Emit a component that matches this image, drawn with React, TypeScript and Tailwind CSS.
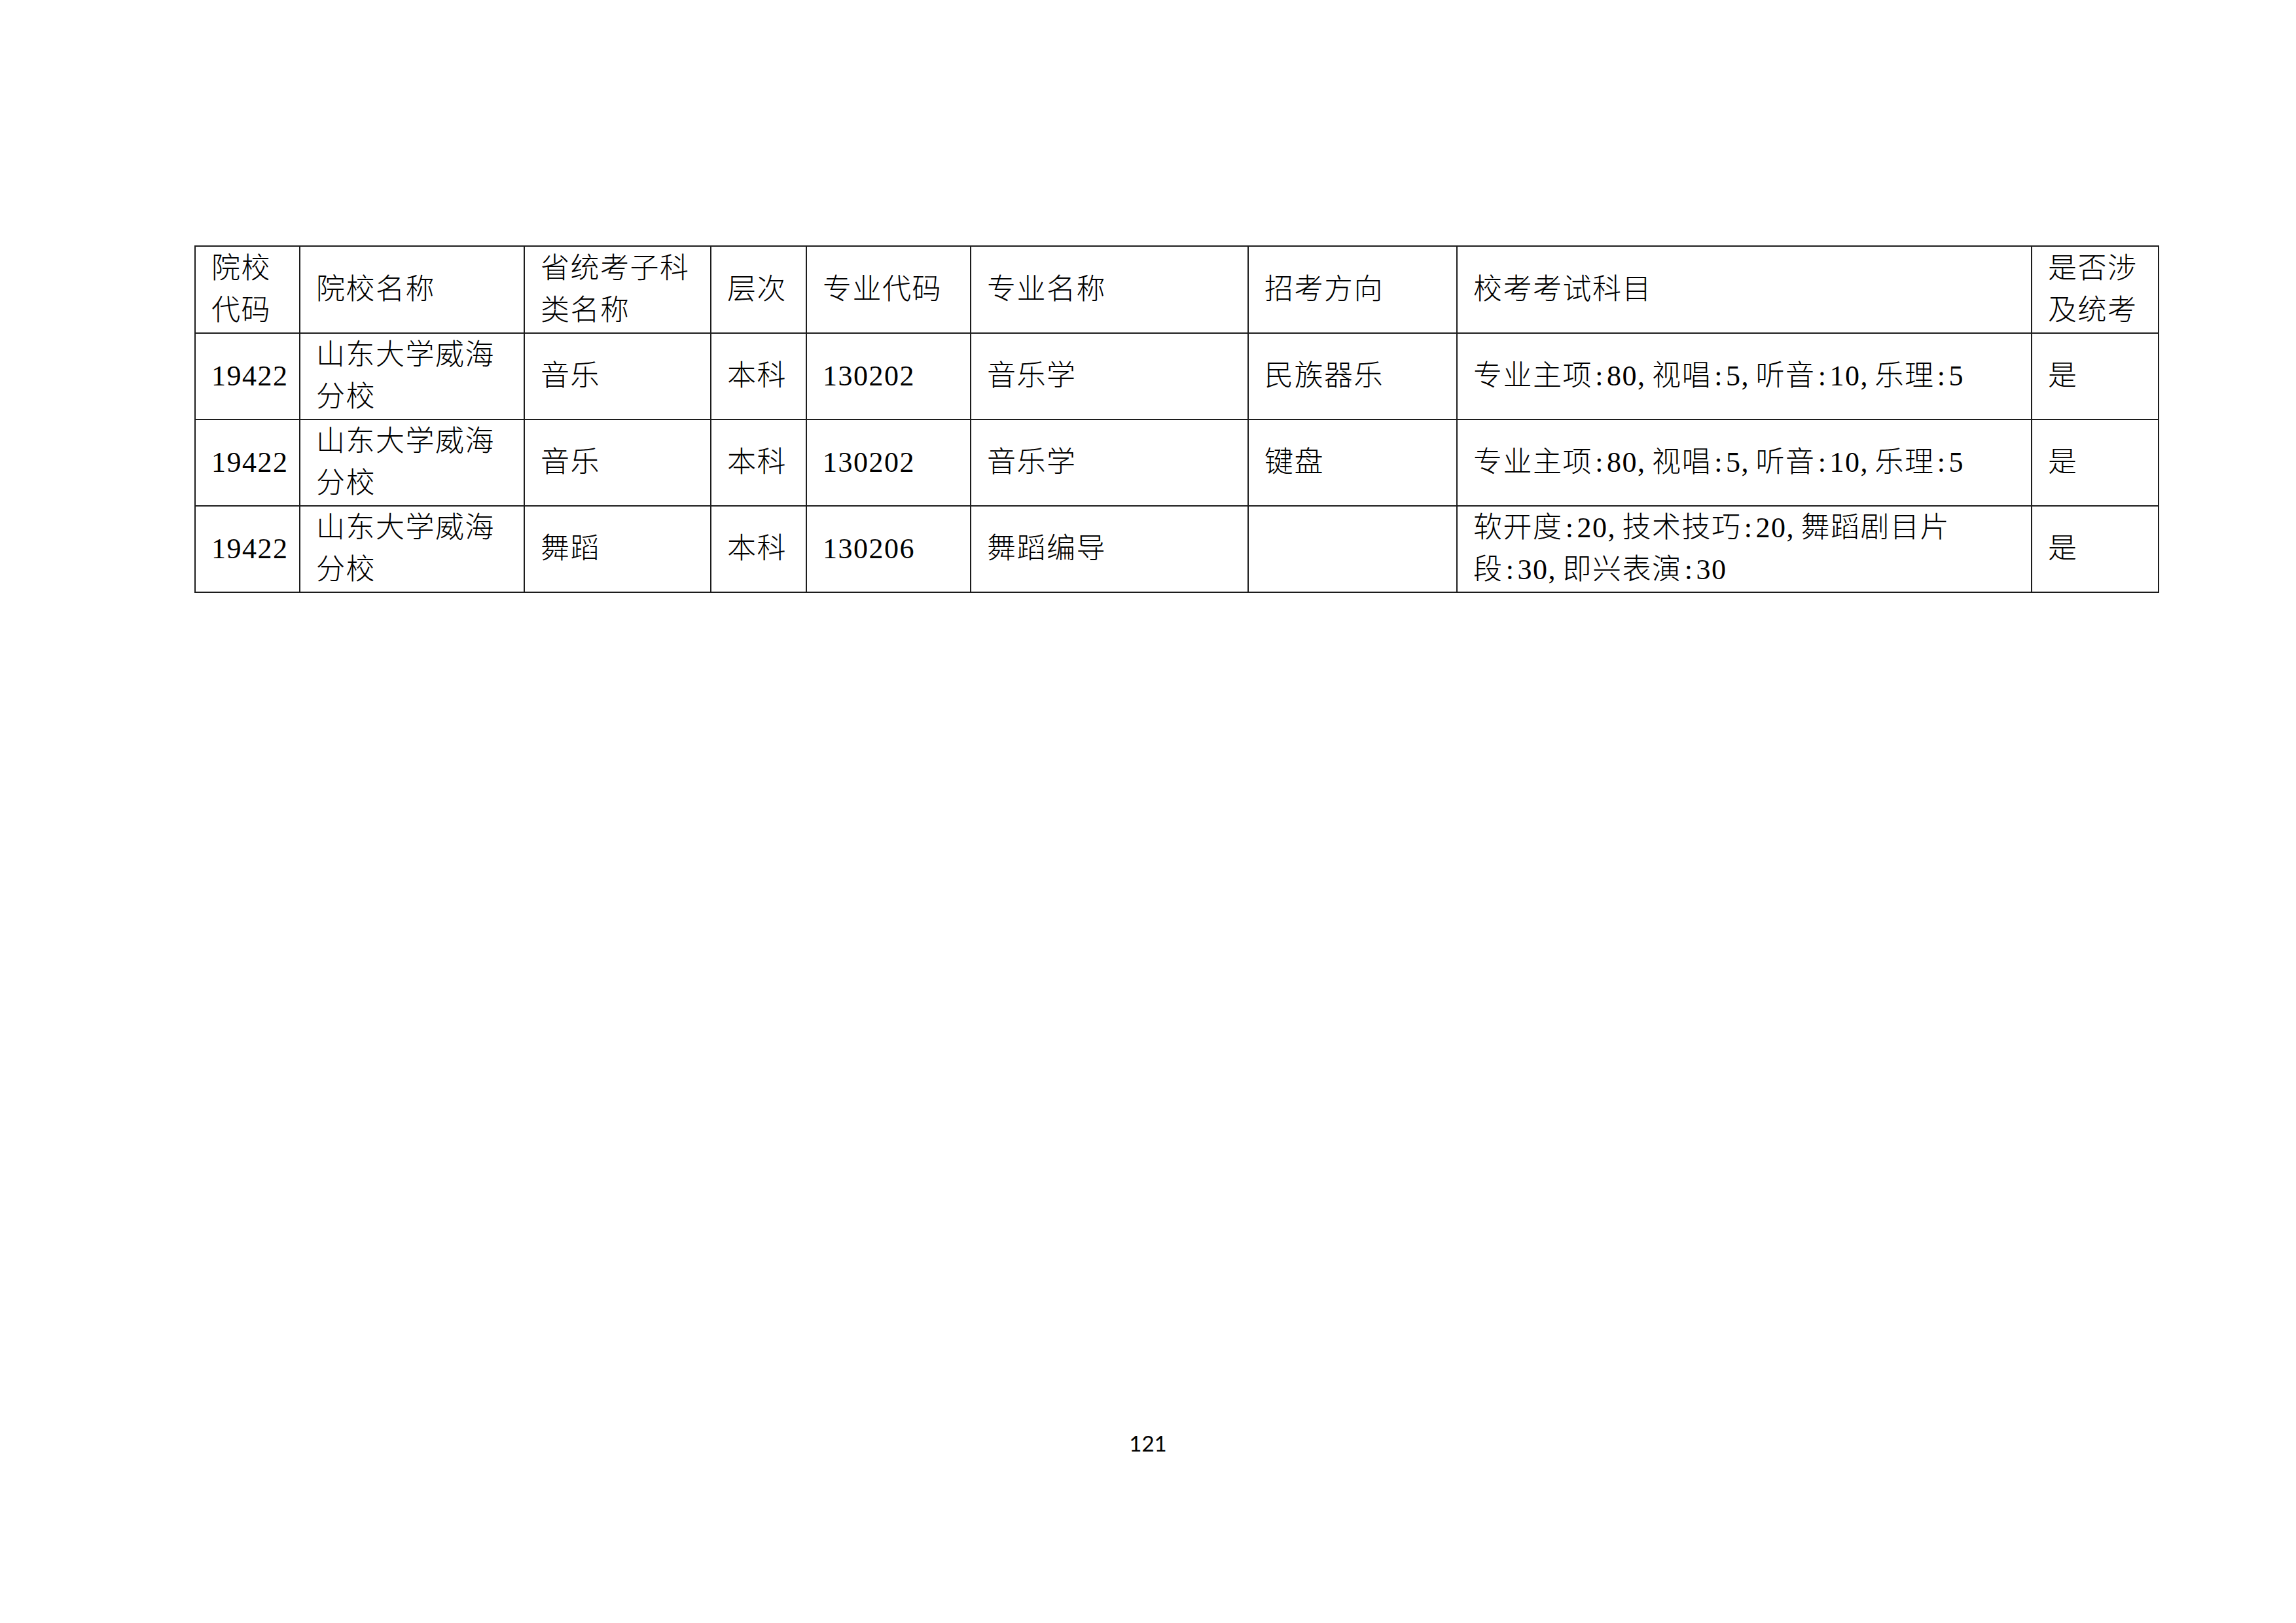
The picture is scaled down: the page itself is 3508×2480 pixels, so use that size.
import { Fragment, type ReactNode } from "react";

const cols = [160, 343, 285, 146, 251, 424, 319, 878, 194];

// SimSun-like half-width punctuation: keep ":" and "," on a half em
function Txt({ text }: { text: string }) {
  const lines = text.split("\n");
  return (
    <>
      {lines.map((line, li) => (
        <Fragment key={li}>
          {li > 0 && <br />}
          {line.split("").map((ch, i) =>
            ch === ":" ? (
              <span key={i} className="inline-block w-[0.5em] text-center">:</span>
            ) : ch === "," ? (
              <span key={i} className="inline-block w-[0.5em]">,</span>
            ) : (
              <Fragment key={i}>{ch}</Fragment>
            )
          )}
        </Fragment>
      ))}
    </>
  );
}

const header = [
  "院校\n代码",
  "院校名称",
  "省统考子科\n类名称",
  "层次",
  "专业代码",
  "专业名称",
  "招考方向",
  "校考考试科目",
  "是否涉\n及统考",
];

const rows = [
  ["19422", "山东大学威海\n分校", "音乐", "本科", "130202", "音乐学", "民族器乐", "专业主项:80,视唱:5,听音:10,乐理:5", "是"],
  ["19422", "山东大学威海\n分校", "音乐", "本科", "130202", "音乐学", "键盘", "专业主项:80,视唱:5,听音:10,乐理:5", "是"],
  ["19422", "山东大学威海\n分校", "舞蹈", "本科", "130206", "舞蹈编导", "", "软开度:20,技术技巧:20,舞蹈剧目片\n段:30,即兴表演:30", "是"],
];

function Cell({ children }: { children: ReactNode }) {
  return (
    <td className="border-2 border-[#1c1c1c] px-[24px] py-0 align-middle text-left leading-[64px] whitespace-nowrap">
      {children}
    </td>
  );
}

export default function App() {
  return (
    <div className="w-[3508px] h-[2480px] bg-white flex flex-col text-black">
      <div className="pt-[375px] pl-[297px]">
        <table
          className="table-fixed border-collapse w-[3000px] text-[44px] font-light tracking-[1.5px]"
          style={{ fontFamily: '"Liberation Serif", "Noto Sans CJK SC", serif' }}
        >
          <colgroup>
            {cols.map((w, i) => (
              <col key={i} style={{ width: w }} />
            ))}
          </colgroup>
          <tbody>
            <tr className="h-[133px]">
              {header.map((h, i) => (
                <Cell key={i}>
                  <Txt text={h} />
                </Cell>
              ))}
            </tr>
            {rows.map((r, ri) => (
              <tr key={ri} className="h-[132px]">
                {r.map((c, ci) => (
                  <Cell key={ci}>
                    <Txt text={c} />
                  </Cell>
                ))}
              </tr>
            ))}
          </tbody>
        </table>
      </div>

      {/* page footer */}
      <div className="mt-auto pb-[255px] text-center text-[33px] leading-[40px] font-['Lato',sans-serif]">
        121
      </div>
    </div>
  );
}
